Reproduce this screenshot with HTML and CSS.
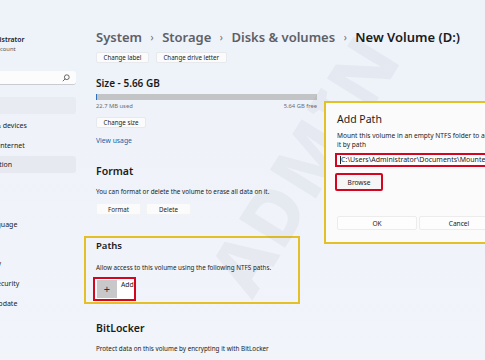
FILE: index.html
```html
<!DOCTYPE html>
<html lang="en">
<head>
    <meta charset="UTF-8">
    <meta name="viewport" content="width=device-width, initial-scale=1.0">
    <title>New Volume (D:) - Settings</title>
    <link rel="stylesheet" href="styles.css">
</head>
<body>
    <div class="window">
        <aside class="sidebar">
            <div class="user">
                <div class="user-name">Administrator</div>
                <div class="user-type">Local Account</div>
            </div>
            <div class="search">
                <span class="search-text">Find a setting</span>
                <svg class="search-icon" width="8" height="8" viewBox="0 0 8 8">
                    <circle cx="4.8" cy="3.2" r="2.4" fill="none" stroke="#444" stroke-width="0.8"/>
                    <line x1="3.1" y1="4.9" x2="0.8" y2="7.2" stroke="#444" stroke-width="0.8"/>
                </svg>
            </div>
            <nav class="nav">
                <div class="nav-item selected">System</div>
                <div class="nav-item">Bluetooth &amp; devices</div>
                <div class="nav-item">Network &amp; internet</div>
                <div class="nav-item hover">Personalization</div>
                <div class="nav-item">Apps</div>
                <div class="nav-item">Accounts</div>
                <div class="nav-item">Time &amp; language</div>
                <div class="nav-item">Gaming</div>
                <div class="nav-item">Accessibility</div>
                <div class="nav-item">Privacy &amp; security</div>
                <div class="nav-item">Windows Update</div>
            </nav>
        </aside>

        <main class="content">
            <h1 class="crumbs">
                <span class="crumb">System</span>
                <span class="crumb-sep">&rsaquo;</span>
                <span class="crumb">Storage</span>
                <span class="crumb-sep">&rsaquo;</span>
                <span class="crumb">Disks &amp; volumes</span>
                <span class="crumb-sep">&rsaquo;</span>
                <span class="crumb current">New Volume (D:)</span>
            </h1>

            <div class="btn-row top-buttons">
                <button class="btn">Change label</button>
                <button class="btn">Change drive letter</button>
            </div>

            <h2 class="size">Size - 5.66 GB</h2>
            <div class="bar"><div class="bar-used" style="width: 0.4%"></div></div>
            <div class="bar-legend">
                <span>22.7 MB used</span>
                <span>5.64 GB free</span>
            </div>
            <button class="btn change-size">Change size</button>
            <a class="link" href="#">View usage</a>

            <section class="group">
                <h2 class="group-title">Format</h2>
                <p class="group-text">You can format or delete the volume to erase all data on it.</p>
                <div class="btn-row format-buttons">
                    <button class="btn wide">Format</button>
                    <button class="btn wide">Delete</button>
                </div>
            </section>

            <section class="group paths">
                <h2 class="group-title">Paths</h2>
                <p class="group-text">Allow access to this volume using the following NTFS paths.</p>
                <div class="add-path">
                    <span class="add-icon">+</span>
                    <span class="add-label">Add</span>
                </div>
            </section>

            <section class="group bitlocker">
                <h2 class="group-title">BitLocker</h2>
                <p class="group-text">Protect data on this volume by encrypting it with BitLocker</p>
            </section>
        </main>
    </div>

    <div class="watermark">ADMIN</div>

    <div class="dialog">
        <div class="dialog-title">Add Path</div>
        <p class="dialog-text">Mount this volume in an empty NTFS folder to access<br>it by path</p>
        <div class="path-input"><span class="caret"></span>C:\Users\Administrator\Documents\Mounted</div>
        <button class="btn browse">Browse</button>
        <div class="dialog-footer">
            <button class="btn footer-btn">OK</button>
            <button class="btn footer-btn">Cancel</button>
        </div>
    </div>
</body>
</html>
```
FILE: styles.css
```css
body {
    margin: 0;
    width: 485px;
    height: 360px;
    overflow: hidden;
    position: relative;
    background: linear-gradient(180deg, #eef2f9 0%, #f1f4f9 100%);
    font-family: "Noto Sans", "Open Sans", sans-serif;
    color: #1b1b1b;
}
.window {
    display: flex;
    height: 360px;
}

/* sidebar, cut off at the left edge */
.sidebar {
    width: 122px;
    flex-shrink: 0;
    margin-left: -44px;
    padding: 35px 2px 0 0;
    box-sizing: border-box;
    white-space: nowrap;
}
.user {
    padding-left: 22px;
}
.user-name {
    font-size: 6.8px;
    line-height: 9px;
    font-weight: 600;
}
.user-type {
    font-size: 5.8px;
    line-height: 9px;
    margin-top: 0.5px;
    color: #555;
}
.search {
    margin-top: 17.5px;
    height: 14px;
    background: #fcfcfd;
    border-radius: 3px;
    border-bottom: 1px solid #c9cbd0;
    box-sizing: border-box;
    display: flex;
    align-items: center;
    justify-content: space-between;
    padding: 0 6px 0 4px;
}
.search-text {
    font-size: 6.5px;
    color: #fcfcfd;
}
.search-icon {
    display: block;
}
.nav {
    margin-top: 12px;
}
.nav-item {
    height: 17px;
    line-height: 17px;
    margin-bottom: 2.8px;
    padding-left: 5.5px;
    font-size: 7px;
    border-radius: 3px;
}
.nav-item.selected {
    background: #e8ebf1;
}
.nav-item.hover {
    background: #e6e9ef;
}

/* main column */
.content {
    padding: 27px 0 0 18px;
    width: 230px;
    white-space: nowrap;
}
.crumbs {
    margin: 0;
    display: flex;
    align-items: center;
    gap: 8.5px;
    font-size: 13px;
    line-height: 20px;
    font-weight: 600;
    color: #5d6066;
}
.crumb-sep {
    font-size: 10px;
    font-weight: 400;
    color: #6a6d73;
}
.crumb.current {
    color: #1b1b1b;
}
.btn-row {
    display: flex;
    gap: 7px;
}
.top-buttons {
    margin-top: 5px;
}
.btn {
    font-family: inherit;
    font-size: 6.2px;
    height: 11px;
    line-height: 9px;
    padding: 0 6.5px;
    background: #fbfbfc;
    border: 1px solid #e8e9ec;
    border-radius: 2px;
    color: #1b1b1b;
    display: block;
}
.size {
    margin: 14px 0 0;
    font-size: 10px;
    line-height: 12px;
    font-weight: 600;
}
.bar {
    margin-top: 5px;
    width: 221px;
    height: 6px;
    background: #c3c4c6;
}
.bar-used {
    height: 100%;
    background: #2f6fc1;
}
.bar-legend {
    margin-top: 2px;
    width: 221px;
    display: flex;
    justify-content: space-between;
    font-size: 5.8px;
    line-height: 8px;
    color: #6b6d70;
}
.change-size {
    margin-top: 7px;
}
.link {
    display: block;
    margin-top: 7.5px;
    font-size: 6.8px;
    line-height: 9px;
    color: #145fa8;
    text-decoration: none;
}
.group-title {
    margin: 0;
    font-size: 10.5px;
    line-height: 14px;
    font-weight: 600;
}
.group-text {
    margin: 9px 0 0;
    font-size: 6.3px;
    line-height: 9px;
}
.group {
    margin-top: 19.5px;
}
.format-buttons {
    margin-top: 7px;
    gap: 5px;
}
.btn.wide {
    width: 45px;
    height: 12px;
    border-color: #f2f3f5;
}

/* highlighted Paths block */
.paths {
    margin-top: 21px;
    margin-left: -12px;
    width: 216px;
    box-sizing: border-box;
    border: 2px solid #e3c126;
    padding: 2px 0 1px 10px;
}
.paths .group-title {
    font-size: 9.5px;
    line-height: 12px;
}
.paths .group-text {
    margin-top: 11px;
}
.add-path {
    margin: 5px 0 0 -3px;
    width: 43px;
    height: 24px;
    box-sizing: border-box;
    border: 2px solid #d6051f;
    background: #fff;
    display: flex;
    align-items: flex-start;
    padding: 1px 0 0 2px;
}
.add-icon {
    width: 20px;
    height: 18px;
    background: #c8c8ca;
    font-size: 11px;
    line-height: 18px;
    text-align: center;
    color: #333;
}
.add-label {
    margin: 1px 0 0 4px;
    font-size: 6.8px;
    line-height: 8px;
}
.bitlocker {
    margin-top: 17px;
}
.bitlocker .group-text {
    margin-top: 8.5px;
}

/* faint watermark over the page */
.watermark {
    position: absolute;
    left: 160px;
    top: 112px;
    font-size: 76px;
    font-weight: 800;
    letter-spacing: 2px;
    color: rgba(60, 60, 70, 0.05);
    transform: rotate(-58deg);
    pointer-events: none;
}

/* Add Path dialog */
.dialog {
    position: absolute;
    left: 324px;
    top: 101px;
    width: 190px;
    height: 143px;
    box-sizing: border-box;
    border: 2px solid #e3c126;
    background: #fbfbfb;
    padding: 9px 0 0 11px;
    white-space: nowrap;
}
.dialog-title {
    font-size: 10.5px;
    line-height: 14px;
}
.dialog-text {
    margin: 5px 0 0;
    font-size: 6.6px;
    line-height: 9px;
}
.path-input {
    margin: 4px 0 0 -2px;
    width: 180px;
    height: 14px;
    box-sizing: border-box;
    border: 2px solid #d6051f;
    background: #fff;
    font-size: 7px;
    line-height: 10px;
    padding-left: 3px;
    overflow: hidden;
    display: flex;
    align-items: center;
}
.caret {
    width: 0.6px;
    height: 8px;
    background: #222;
    margin-right: 0.5px;
}
.browse {
    margin: 6px 0 0 -2px;
    width: 48px;
    height: 18px;
    border: 2px solid #d6051f;
    background: #f6f6f6;
    font-size: 6.6px;
    padding: 0;
}
.dialog-footer {
    margin-top: 25px;
    display: flex;
    gap: 2px;
}
.footer-btn {
    width: 80px;
    height: 14px;
    background: #fdfdfd;
    border-color: #ececec;
    font-size: 6.6px;
}
```
